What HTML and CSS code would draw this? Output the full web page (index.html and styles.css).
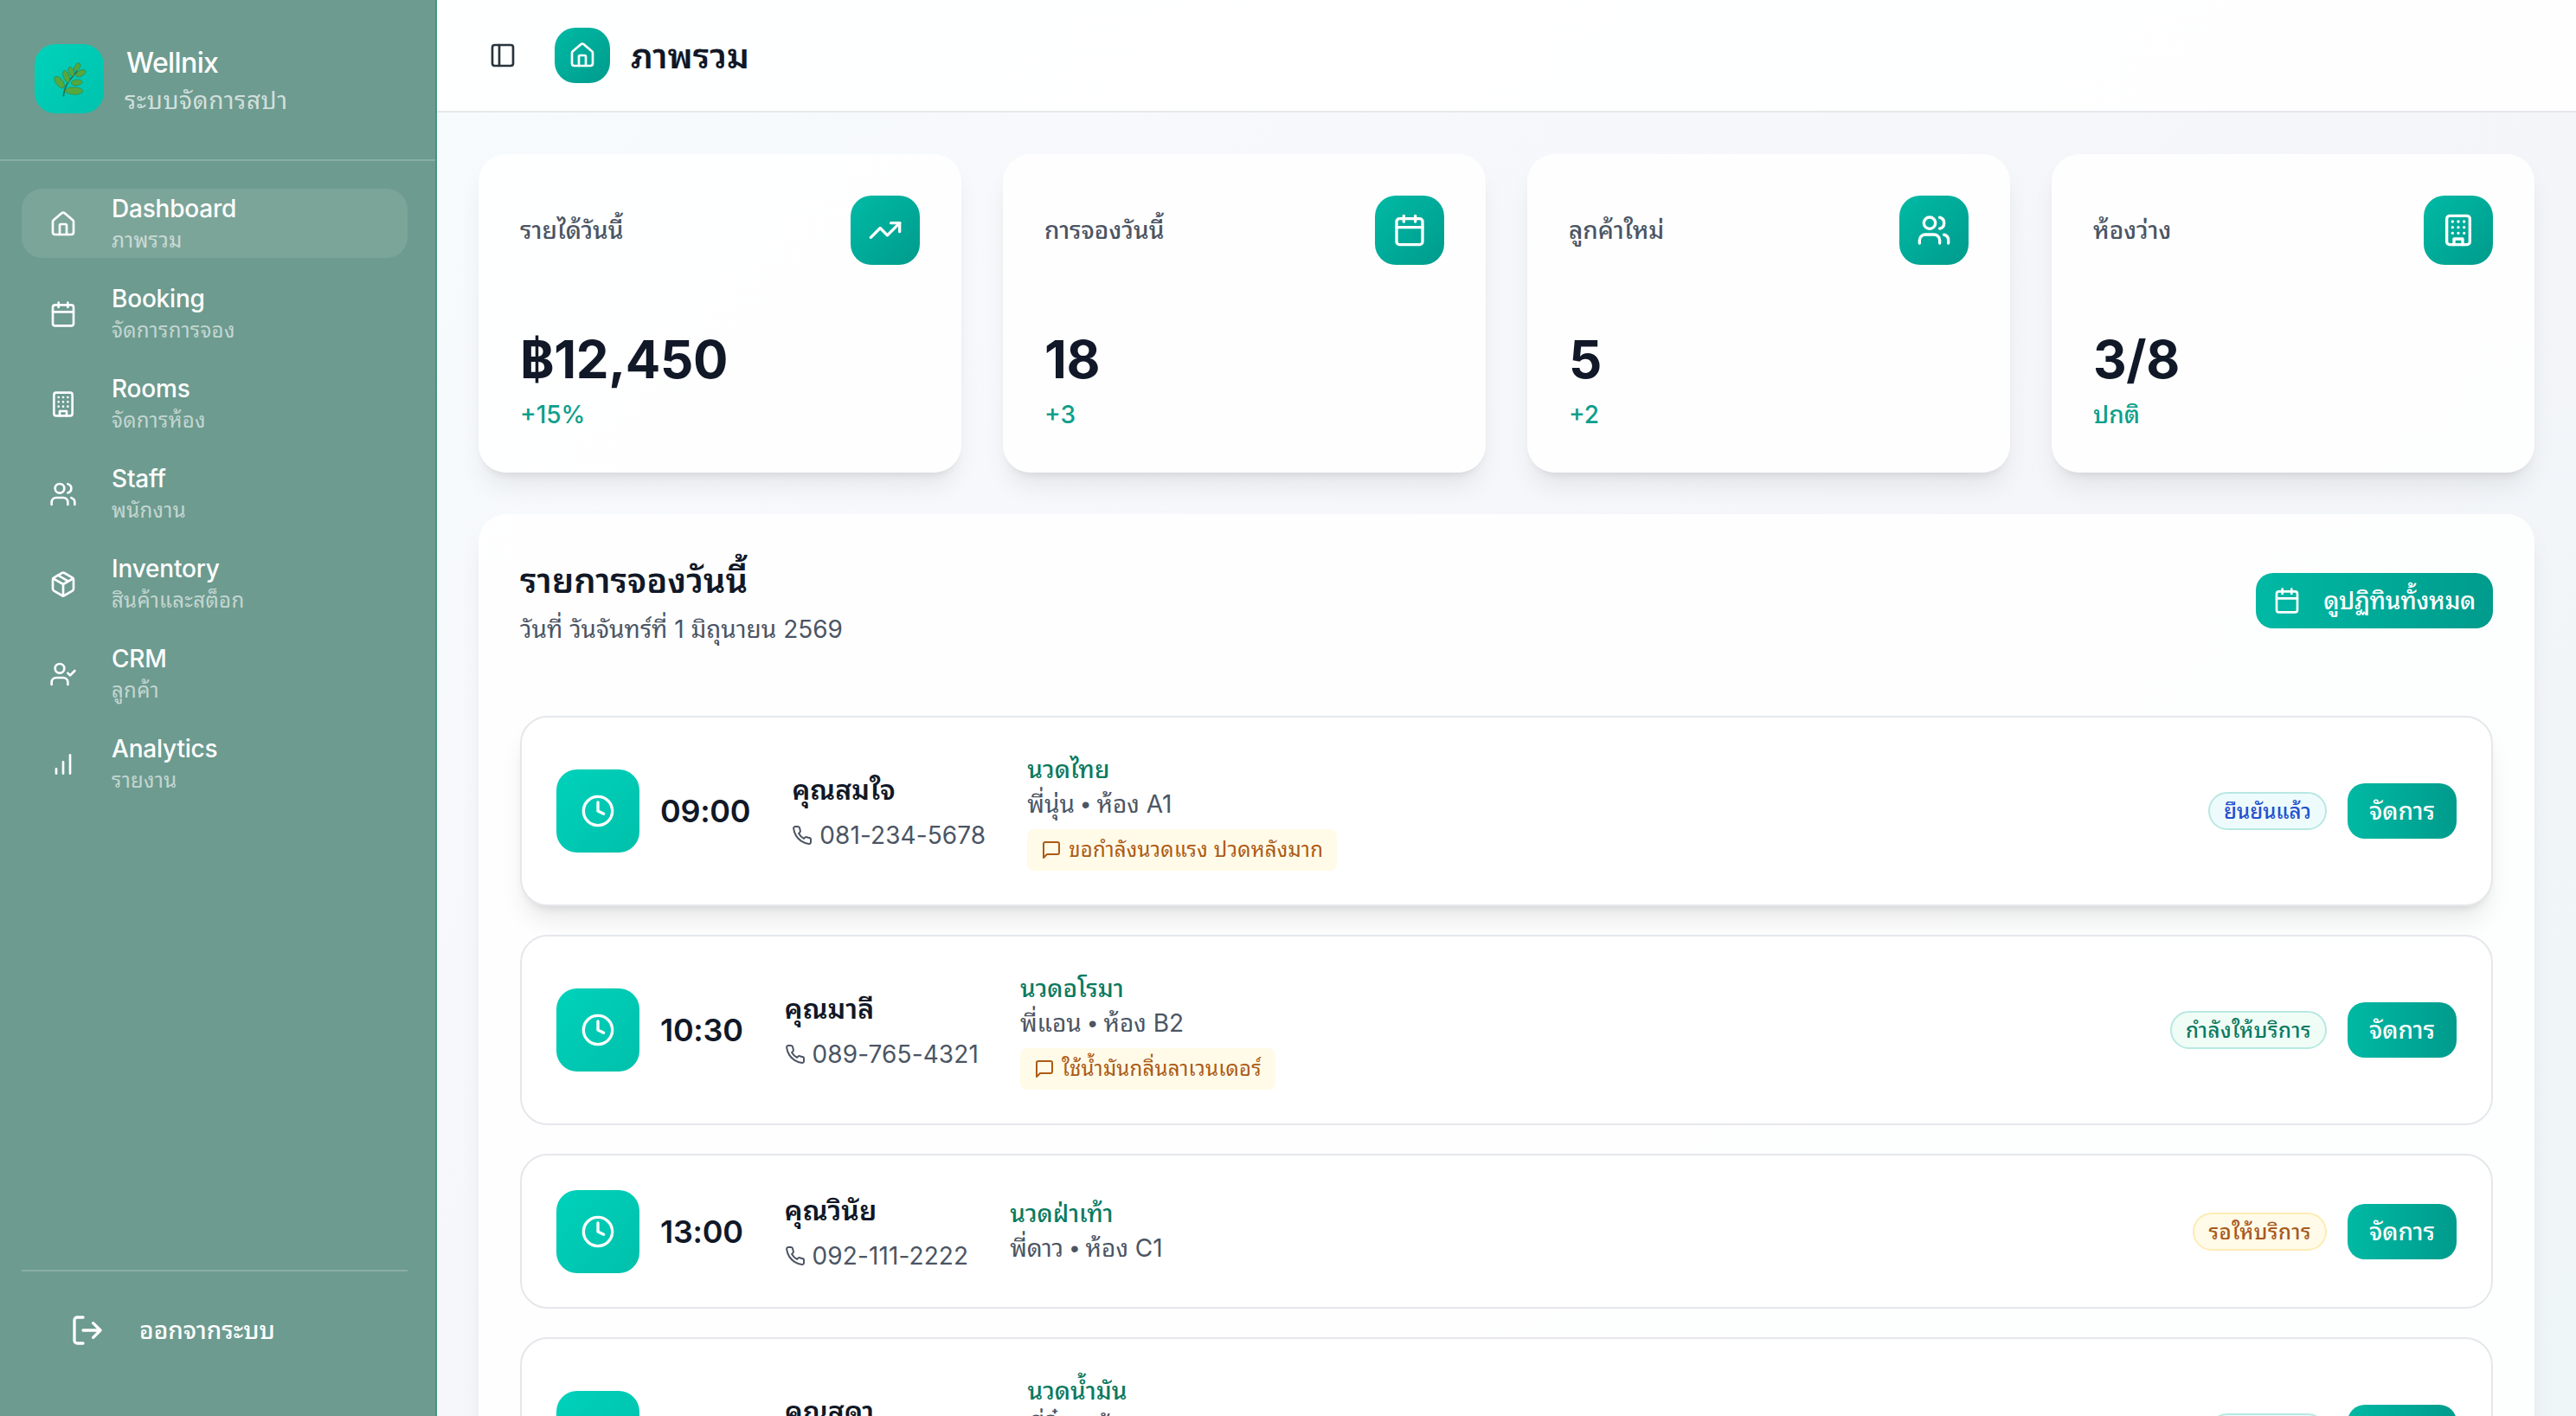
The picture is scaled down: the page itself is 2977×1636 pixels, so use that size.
FILE: index.html
```html
<!DOCTYPE html>
<html lang="th">
<head>
    <meta charset="UTF-8">
    <meta name="viewport" content="width=device-width, initial-scale=1.0">
    <title>Wellnix - ภาพรวม</title>
    <link rel="stylesheet" href="styles.css">
</head>
<body>
    <svg class="sprite" xmlns="http://www.w3.org/2000/svg">
        <symbol id="house" viewBox="0 0 24 24"><path d="M15 21v-8a1 1 0 0 0-1-1h-4a1 1 0 0 0-1 1v8"/><path d="M3 10a2 2 0 0 1 .709-1.528l7-5.999a2 2 0 0 1 2.582 0l7 5.999A2 2 0 0 1 21 10v9a2 2 0 0 1-2 2H5a2 2 0 0 1-2-2z"/></symbol>
        <symbol id="calendar" viewBox="0 0 24 24"><path d="M8 2v4M16 2v4M3 10h18"/><rect width="18" height="18" x="3" y="4" rx="2"/></symbol>
        <symbol id="building" viewBox="0 0 24 24"><rect width="16" height="20" x="4" y="2" rx="2"/><path d="M9 22v-4h6v4M8 6h.01M16 6h.01M12 6h.01M12 10h.01M12 14h.01M16 10h.01M16 14h.01M8 10h.01M8 14h.01"/></symbol>
        <symbol id="users" viewBox="0 0 24 24"><path d="M16 21v-2a4 4 0 0 0-4-4H6a4 4 0 0 0-4 4v2"/><circle cx="9" cy="7" r="4"/><path d="M22 21v-2a4 4 0 0 0-3-3.87M16 3.13a4 4 0 0 1 0 7.75"/></symbol>
        <symbol id="package" viewBox="0 0 24 24"><path d="M11 21.73a2 2 0 0 0 2 0l7-4A2 2 0 0 0 21 16V8a2 2 0 0 0-1-1.73l-7-4a2 2 0 0 0-2 0l-7 4A2 2 0 0 0 3 8v8a2 2 0 0 0 1 1.73z"/><path d="M12 22V12M3.3 7l8.7 5 8.7-5M7.5 4.27l9 5.15"/></symbol>
        <symbol id="user-check" viewBox="0 0 24 24"><path d="m16 11 2 2 4-4M16 21v-2a4 4 0 0 0-4-4H6a4 4 0 0 0-4 4v2"/><circle cx="9" cy="7" r="4"/></symbol>
        <symbol id="chart" viewBox="0 0 24 24"><path d="M12 20V10M18 20V4M6 20v-4"/></symbol>
        <symbol id="logout" viewBox="0 0 24 24"><path d="M9 21H5a2 2 0 0 1-2-2V5a2 2 0 0 1 2-2h4M16 17l5-5-5-5M21 12H9"/></symbol>
        <symbol id="panel" viewBox="0 0 24 24"><rect width="18" height="18" x="3" y="3" rx="2"/><path d="M9 3v18"/></symbol>
        <symbol id="trend" viewBox="0 0 24 24"><path d="M22 7 13.5 15.5 8.5 10.5 2 17"/><path d="M16 7h6v6"/></symbol>
        <symbol id="clock" viewBox="0 0 24 24"><circle cx="12" cy="12" r="10"/><path d="M12 6v6l4 2"/></symbol>
        <symbol id="phone" viewBox="0 0 24 24"><path d="M22 16.92v3a2 2 0 0 1-2.18 2 19.79 19.79 0 0 1-8.63-3.07 19.5 19.5 0 0 1-6-6 19.79 19.79 0 0 1-3.07-8.67A2 2 0 0 1 4.11 2h3a2 2 0 0 1 2 1.72 12.84 12.84 0 0 0 .7 2.81 2 2 0 0 1-.45 2.11L8.09 9.91a16 16 0 0 0 6 6l1.27-1.27a2 2 0 0 1 2.11-.45 12.84 12.84 0 0 0 2.81.7A2 2 0 0 1 22 16.92z"/></symbol>
        <symbol id="message" viewBox="0 0 24 24"><path d="M21 15a2 2 0 0 1-2 2H7l-4 4V5a2 2 0 0 1 2-2h14a2 2 0 0 1 2 2z"/></symbol>
    </svg>

    <div class="app">
        <aside class="sidebar">
            <div class="brand">
                <div class="brand-logo">
                    <svg viewBox="0 0 240 240">
                        <path class="stem" d="M100 181Q103 150 118 130T148 92"/>
                        <g class="leaves">
                            <ellipse cx="86" cy="132" rx="24" ry="12" transform="rotate(52 86 132)"/>
                            <ellipse cx="110" cy="112" rx="22" ry="10" transform="rotate(68 110 112)"/>
                            <ellipse cx="127" cy="95" rx="17" ry="9" transform="rotate(66 127 95)"/>
                            <ellipse cx="148" cy="79" rx="15" ry="9" transform="rotate(-58 148 79)"/>
                            <ellipse cx="160" cy="101" rx="18" ry="10" transform="rotate(-28 160 101)"/>
                            <ellipse cx="146" cy="133" rx="19" ry="10" transform="rotate(-6 146 133)"/>
                            <ellipse cx="137" cy="162" rx="30" ry="13" transform="rotate(2 137 162)"/>
                        </g>
                    </svg>
                </div>
                <div>
                    <div class="brand-name">Wellnix</div>
                    <div class="brand-sub">ระบบจัดการสปา</div>
                </div>
            </div>
            <nav class="nav">
                <a class="nav-item active"><svg class="icon"><use href="#house"/></svg><span><b>Dashboard</b><small>ภาพรวม</small></span></a>
                <a class="nav-item"><svg class="icon"><use href="#calendar"/></svg><span><b>Booking</b><small>จัดการการจอง</small></span></a>
                <a class="nav-item"><svg class="icon"><use href="#building"/></svg><span><b>Rooms</b><small>จัดการห้อง</small></span></a>
                <a class="nav-item"><svg class="icon"><use href="#users"/></svg><span><b>Staff</b><small>พนักงาน</small></span></a>
                <a class="nav-item"><svg class="icon"><use href="#package"/></svg><span><b>Inventory</b><small>สินค้าและสต็อก</small></span></a>
                <a class="nav-item"><svg class="icon"><use href="#user-check"/></svg><span><b>CRM</b><small>ลูกค้า</small></span></a>
                <a class="nav-item"><svg class="icon"><use href="#chart"/></svg><span><b>Analytics</b><small>รายงาน</small></span></a>
            </nav>
            <div class="logout">
                <svg class="icon icon-lg"><use href="#logout"/></svg>
                <span>ออกจากระบบ</span>
            </div>
        </aside>

        <main class="main">
            <header class="topbar">
                <svg class="icon toggle"><use href="#panel"/></svg>
                <div class="topbar-icon"><svg class="icon"><use href="#house"/></svg></div>
                <h1>ภาพรวม</h1>
            </header>

            <div class="content">
                <section class="stats">
                    <div class="stat">
                        <div class="stat-head"><span>รายได้วันนี้</span><div class="stat-icon"><svg class="icon icon-lg"><use href="#trend"/></svg></div></div>
                        <div class="stat-value">฿12,450</div>
                        <div class="stat-change">+15%</div>
                    </div>
                    <div class="stat">
                        <div class="stat-head"><span>การจองวันนี้</span><div class="stat-icon"><svg class="icon icon-lg"><use href="#calendar"/></svg></div></div>
                        <div class="stat-value">18</div>
                        <div class="stat-change">+3</div>
                    </div>
                    <div class="stat">
                        <div class="stat-head"><span>ลูกค้าใหม่</span><div class="stat-icon"><svg class="icon icon-lg"><use href="#users"/></svg></div></div>
                        <div class="stat-value">5</div>
                        <div class="stat-change">+2</div>
                    </div>
                    <div class="stat">
                        <div class="stat-head"><span>ห้องว่าง</span><div class="stat-icon"><svg class="icon icon-lg"><use href="#building"/></svg></div></div>
                        <div class="stat-value">3/8</div>
                        <div class="stat-change">ปกติ</div>
                    </div>
                </section>

                <section class="panel">
                    <div class="panel-head">
                        <div>
                            <h2>รายการจองวันนี้</h2>
                            <p>วันที่ วันจันทร์ที่ 1 มิถุนายน 2569</p>
                        </div>
                        <button class="btn btn-calendar"><svg class="icon"><use href="#calendar"/></svg>ดูปฏิทินทั้งหมด</button>
                    </div>

                    <div class="bookings">
                        <div class="booking hover">
                            <div class="clock"><svg class="icon icon-lg"><use href="#clock"/></svg></div>
                            <div class="time">09:00</div>
                            <div class="customer">
                                <div class="name">คุณสมใจ</div>
                                <div class="phone"><svg class="icon icon-sm"><use href="#phone"/></svg>081-234-5678</div>
                            </div>
                            <div class="detail">
                                <div class="service">นวดไทย</div>
                                <div class="staff">พี่นุ่น <i>•</i> ห้อง A1</div>
                                <div class="note"><svg class="icon icon-sm"><use href="#message"/></svg>ขอกำลังนวดแรง ปวดหลังมาก</div>
                            </div>
                            <div class="actions"><span class="badge confirmed">ยืนยันแล้ว</span><button class="btn">จัดการ</button></div>
                        </div>
                        <div class="booking">
                            <div class="clock"><svg class="icon icon-lg"><use href="#clock"/></svg></div>
                            <div class="time">10:30</div>
                            <div class="customer">
                                <div class="name">คุณมาลี</div>
                                <div class="phone"><svg class="icon icon-sm"><use href="#phone"/></svg>089-765-4321</div>
                            </div>
                            <div class="detail">
                                <div class="service">นวดอโรมา</div>
                                <div class="staff">พี่แอน <i>•</i> ห้อง B2</div>
                                <div class="note"><svg class="icon icon-sm"><use href="#message"/></svg>ใช้น้ำมันกลิ่นลาเวนเดอร์</div>
                            </div>
                            <div class="actions"><span class="badge serving">กำลังให้บริการ</span><button class="btn">จัดการ</button></div>
                        </div>
                        <div class="booking">
                            <div class="clock"><svg class="icon icon-lg"><use href="#clock"/></svg></div>
                            <div class="time">13:00</div>
                            <div class="customer">
                                <div class="name">คุณวินัย</div>
                                <div class="phone"><svg class="icon icon-sm"><use href="#phone"/></svg>092-111-2222</div>
                            </div>
                            <div class="detail">
                                <div class="service">นวดฝ่าเท้า</div>
                                <div class="staff">พี่ดาว <i>•</i> ห้อง C1</div>
                            </div>
                            <div class="actions"><span class="badge waiting">รอให้บริการ</span><button class="btn">จัดการ</button></div>
                        </div>
                        <div class="booking">
                            <div class="clock"><svg class="icon icon-lg"><use href="#clock"/></svg></div>
                            <div class="time">14:30</div>
                            <div class="customer">
                                <div class="name">คุณสุดา</div>
                                <div class="phone"><svg class="icon icon-sm"><use href="#phone"/></svg>088-999-8888</div>
                            </div>
                            <div class="detail">
                                <div class="service">นวดน้ำมัน</div>
                                <div class="staff">พี่จิ๋ม <i>•</i> ห้อง A2</div>
                                <div class="note"><svg class="icon icon-sm"><use href="#message"/></svg>แพ้น้ำมันมะพร้าว</div>
                            </div>
                            <div class="actions"><span class="badge confirmed">ยืนยันแล้ว</span><button class="btn">จัดการ</button></div>
                        </div>
                    </div>
                </section>
            </div>
        </main>
    </div>
</body>
</html>
```
FILE: styles.css
```css
* {
    box-sizing: border-box;
    margin: 0;
    padding: 0;
}
body {
    font-family: Inter, "Noto Sans Thai Looped", Loma, sans-serif;
    font-size: 28px;
    line-height: 40px;
    color: #111827;
    overflow: hidden;
}
.sprite {
    display: none;
}
.icon {
    width: 32px;
    height: 32px;
    flex-shrink: 0;
    fill: none;
    stroke: currentColor;
    stroke-width: 2;
    stroke-linecap: round;
    stroke-linejoin: round;
}
.icon-lg {
    width: 40px;
    height: 40px;
}
.icon-sm {
    width: 24px;
    height: 24px;
}
.app {
    display: flex;
    height: 100vh;
    overflow: hidden;
}

/* Sidebar */
.sidebar {
    width: 505px;
    flex-shrink: 0;
    display: flex;
    flex-direction: column;
    background: #6d9b8f;
    border-right: 2px solid #439482;
    color: #fff;
}
.brand {
    height: 186px;
    display: flex;
    gap: 24px;
    padding: 51px 40px 0;
    border-bottom: 2px solid #8aafa5;
}
.brand-logo {
    width: 80px;
    height: 80px;
    border-radius: 24px;
    background: linear-gradient(135deg, #00d2bb, #00c2ad);
}
.brand-logo svg {
    display: block;
}
.brand-logo .stem {
    fill: none;
    stroke: #2c6e45;
    stroke-width: 5;
}
.brand-logo .leaves {
    fill: #55a83c;
    stroke: #2f8557;
    stroke-width: 2;
}
.brand-name {
    font-size: 32px;
    font-weight: 500;
    line-height: 44px;
    padding-left: 2px;
    letter-spacing: -0.6px;
}
.brand-sub {
    color: rgba(255, 255, 255, 0.7);
    line-height: 42px;
    letter-spacing: 0.6px;
}
.nav {
    display: flex;
    flex-direction: column;
    gap: 24px;
    padding: 32px 32px 0 25px;
}
.nav-item {
    display: flex;
    align-items: center;
    gap: 40px;
    height: 80px;
    padding: 2px 32px 0;
    border-radius: 24px;
}
.nav-item.active {
    background: #7ca599;
}
.nav-item b,
.nav-item small {
    display: block;
    font-weight: 500;
}
.nav-item b {
    line-height: 38px;
    letter-spacing: -0.2px;
}
.nav-item small {
    font-size: 24px;
    font-weight: 400;
    line-height: 36px;
    letter-spacing: 0.3px;
    color: rgba(255, 255, 255, 0.6);
}
.logout {
    display: flex;
    align-items: center;
    gap: 40px;
    height: 138px;
    margin: auto 32px 31px 25px;
    padding: 0 56px;
    border-top: 2px solid #8aafa5;
    font-weight: 500;
}

/* Header */
.main {
    flex: 1;
    min-width: 0;
    background: linear-gradient(135deg, #f6fbfc, #f7f8fb 30%, #f3f5f9 65%, #eff6f8);
}
.topbar {
    height: 130px;
    display: flex;
    align-items: center;
    padding: 0 60px;
    background: rgba(255, 255, 255, 0.9);
    border-bottom: 2px solid #e5e7eb;
}
.toggle {
    color: #29343d;
}
.topbar-icon {
    width: 64px;
    height: 64px;
    margin: 0 24px 0 44px;
    display: grid;
    place-items: center;
    border-radius: 24px;
    background: linear-gradient(135deg, #00baa5, #009b8c);
    color: #fff;
}
.topbar h1 {
    font-size: 40px;
    font-weight: 600;
    padding-top: 2px;
}

/* Stats */
.content {
    padding: 48px;
}
.stats {
    display: grid;
    grid-template-columns: repeat(4, 1fr);
    gap: 48px;
}
.stat,
.panel {
    border-radius: 32px;
    background: rgba(255, 255, 255, 0.85);
    box-shadow: 0 20px 30px -6px rgba(0, 0, 0, 0.08), 0 8px 12px -8px rgba(0, 0, 0, 0.12);
}
.stat {
    height: 368px;
    padding: 48px;
}
.stat-head {
    display: flex;
    justify-content: space-between;
    align-items: center;
    margin-bottom: 73px;
    color: #4b5563;
    font-weight: 500;
}
.stat-icon {
    width: 80px;
    height: 80px;
    display: grid;
    place-items: center;
    border-radius: 24px;
    background: linear-gradient(135deg, #00baa5, #009b8c);
    color: #fff;
}
.stat-value {
    font-size: 60px;
    font-weight: 700;
    line-height: 72px;
    margin-bottom: 8px;
    letter-spacing: -0.4px;
}
.stat-change {
    color: #0d9f8b;
    font-weight: 500;
}

/* Bookings panel */
.panel {
    margin-top: 48px;
    padding: 48px;
    height: 1400px;
}
.panel-head {
    display: flex;
    justify-content: space-between;
    height: 185px;
}
.panel h2 {
    font-size: 40px;
    font-weight: 600;
    line-height: 58px;
    margin-bottom: 7px;
}
.panel p {
    color: #4b5563;
}
.btn {
    height: 64px;
    padding: 0 25px;
    border: none;
    border-radius: 20px;
    background: linear-gradient(90deg, #00b9a4, #009b8c);
    color: #fff;
    font: inherit;
    font-weight: 500;
}
.btn-calendar {
    display: flex;
    align-items: center;
    gap: 26px;
    margin-top: 20px;
    padding: 0 20px;
    letter-spacing: -0.3px;
}
.bookings {
    display: flex;
    flex-direction: column;
    gap: 33px;
}
.booking {
    display: flex;
    align-items: center;
    min-height: 179px;
    padding: 39.5px 40px;
    border: 2px solid #e5e7eb;
    border-radius: 32px;
    background: rgba(255, 255, 255, 0.7);
}
.booking.hover {
    background: #fff;
    box-shadow: 0 20px 30px -6px rgba(0, 0, 0, 0.09), 0 8px 12px -8px rgba(0, 0, 0, 0.14);
}
.clock {
    width: 96px;
    height: 96px;
    display: grid;
    place-items: center;
    border-radius: 24px;
    background: linear-gradient(135deg, #00d2bb, #00c0ab);
    color: #fff;
}
.time {
    margin: 0 48px 0 24px;
    font-size: 36px;
    font-weight: 600;
    letter-spacing: -0.3px;
}
.customer {
    margin-right: 48px;
}
.name {
    font-size: 32px;
    font-weight: 600;
    line-height: 48px;
    margin-bottom: 8px;
}
.phone {
    display: flex;
    align-items: center;
    gap: 8px;
    color: #4b5563;
    letter-spacing: 0.1px;
}
.service {
    color: #0b7a60;
    font-weight: 500;
}
.staff {
    color: #4b5563;
}
.staff i {
    font-family: "Liberation Sans", sans-serif;
    font-style: normal;
}
.note {
    display: flex;
    align-items: center;
    gap: 8px;
    height: 48px;
    margin-top: 8px;
    padding: 0 16px;
    border-radius: 8px;
    background: #fffbe8;
    color: #ad5a14;
    font-size: 24px;
    letter-spacing: 0.2px;
}
.actions {
    display: flex;
    align-items: center;
    gap: 24px;
    margin-left: auto;
}
.badge {
    height: 44px;
    padding: 0 16px;
    border: 2px solid #b8e8e2;
    border-radius: 22px;
    font-size: 24px;
    font-weight: 500;
    line-height: 42px;
}
.confirmed {
    background: #eefbfd;
    color: #2450cc;
}
.serving {
    background: #effdf6;
    color: #0b7a60;
    letter-spacing: 0.5px;
}
.waiting {
    background: #fffbe8;
    border-color: #fdecb4;
    color: #a8591c;
    letter-spacing: 0.5px;
}
```
